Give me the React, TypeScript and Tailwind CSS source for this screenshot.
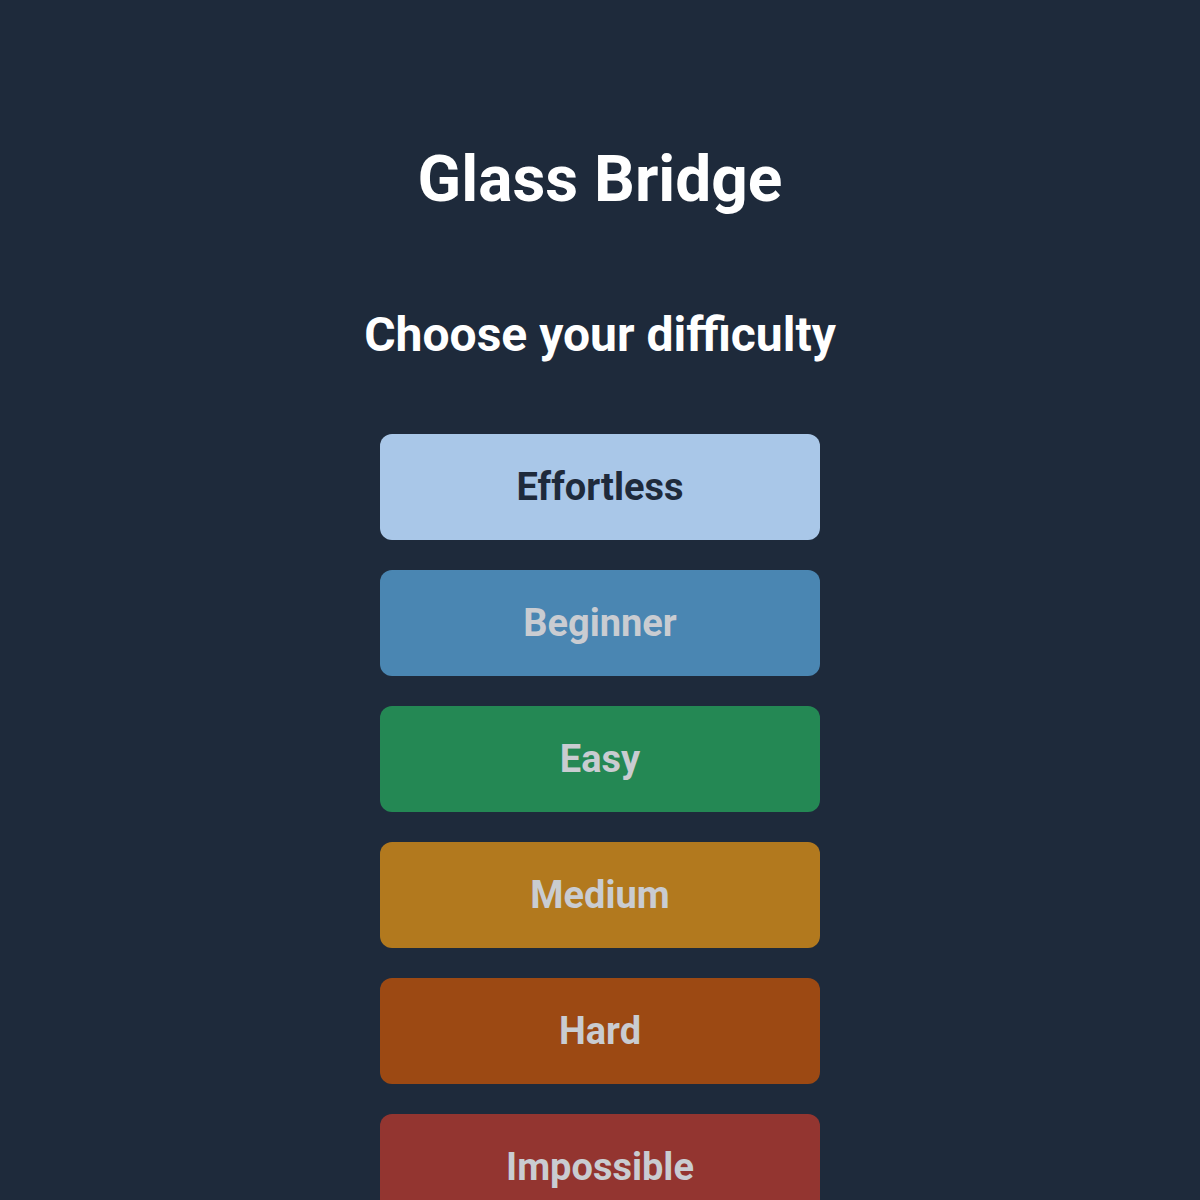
const levels = [
  { name: "Effortless", bg: "bg-[#a9c7e8]", text: "text-[#1e2a3b]" },
  { name: "Beginner", bg: "bg-[#4a86b2]", text: "text-[#c9ccd1]" },
  { name: "Easy", bg: "bg-[#248854]", text: "text-[#c9ccd1]" },
  { name: "Medium", bg: "bg-[#b2791e]", text: "text-[#c9ccd1]" },
  { name: "Hard", bg: "bg-[#9c4913]", text: "text-[#c9ccd1]" },
  { name: "Impossible", bg: "bg-[#933530]", text: "text-[#c9ccd1]" },
];

export default function App() {
  return (
    <div
      className="w-full min-h-screen bg-[#1e2a3b] flex flex-col items-center"
      style={{ fontFamily: "Roboto, 'Noto Sans', sans-serif" }}
    >
      <h1 className="mt-[140px] text-[64px] leading-[80px] font-bold text-white">
        Glass Bridge
      </h1>
      <h2 className="mt-[87px] text-[48px] leading-[56px] font-bold text-white">
        Choose your difficulty
      </h2>
      <div className="mt-[71px] flex flex-col gap-[30px]">
        {levels.map((l) => (
          <button
            key={l.name}
            className={`w-[440px] h-[106px] rounded-[12px] text-[38px] font-bold ${l.bg} ${l.text}`}
          >
            {l.name}
          </button>
        ))}
      </div>
    </div>
  );
}
